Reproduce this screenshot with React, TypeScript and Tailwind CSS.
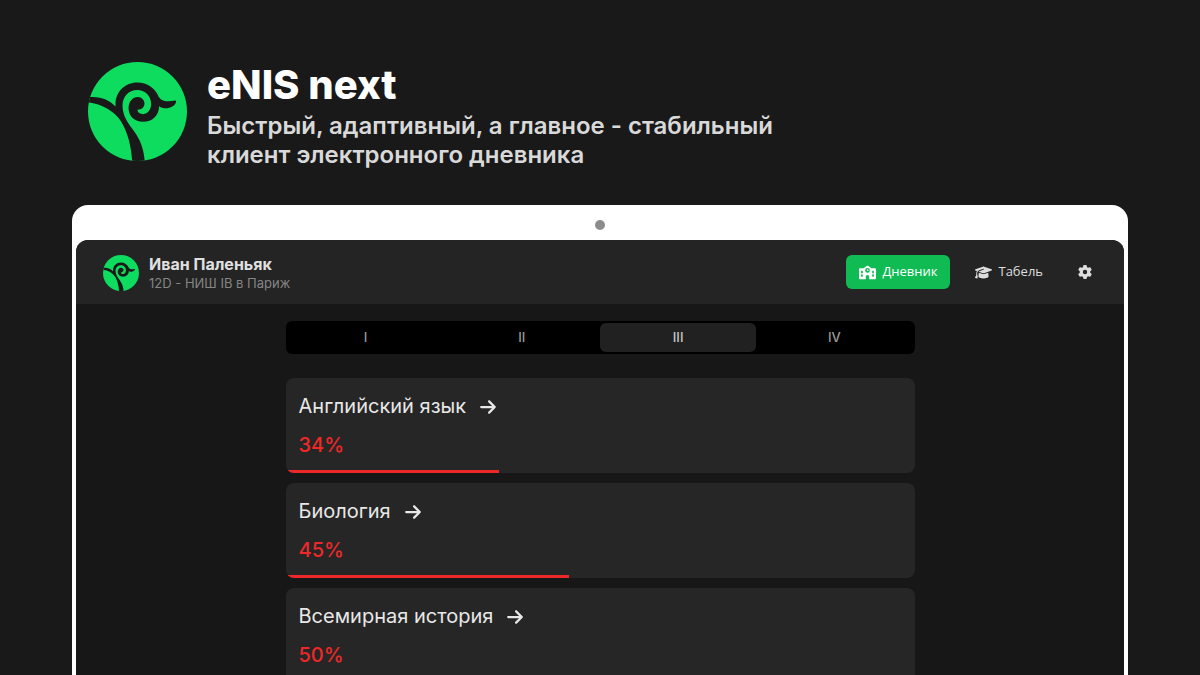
import { FaGear, FaArrowRight, FaSchool, FaGraduationCap } from "react-icons/fa6";

type Subject = { name: string; score: number; bar: number };

const subjects: Subject[] = [
  { name: "Английский язык", score: 34, bar: 34 },
  { name: "Биология", score: 45, bar: 45 },
  { name: "Всемирная история", score: 50, bar: 50 },
];

const terms = ["I", "II", "III", "IV"];
const activeTerm = "III";

function Logo({ className }: { className: string }) {
  return (
    <svg viewBox="24 21 298 298" className={className} role="img" aria-label="eNIS next">
      <clipPath id="disc">
        <circle cx="173" cy="170" r="149" />
      </clipPath>
      <g clipPath="url(#disc)">
        <rect x="24" y="21" width="298" height="298" fill="#0ddc5f" />
        <path
          fill="#191919"
          d="M20 128C58 122 86 134 107 155C104 112 135 83 172 83C203 83 226 100 237 126C248 142 268 141 287 137Q290 138 289 142C285 153 271 161 256 160C247 160 242 157 238 154C238 182 217 201 190 201C164 201 146 183 146 160C146 140 158 126 174 126C186 126 194 135 194 146C194 157 186 164 173 165C173 174 182 178 190 178C204 177 214 165 214 147C214 122 195 105 172 105C146 105 128 125 128 152C128 185 145 205 163 230C180 253 192 280 195 322L157 322C155 280 145 235 125 202C103 168 65 147 20 142Z"
        />
      </g>
    </svg>
  );
}

function SubjectCard({ subject }: { subject: Subject }) {
  return (
    <article className="relative h-[95px] shrink-0 overflow-hidden rounded-lg bg-[#262626] px-[13px] pt-[14px]">
      <h2 className="text-xl leading-7 text-[#e8e8e8]">
        <a href="#subject" className="inline-flex items-center gap-[13px]">
          {subject.name}
          <FaArrowRight className="mt-[2px] size-[18px]" aria-hidden="true" />
        </a>
      </h2>
      <p className="mt-[11px] text-xl leading-7 font-medium text-[#ee2828]">{subject.score}%</p>
      <div className="absolute bottom-0 left-0 h-[3px] bg-[#ee2828]" style={{ width: `${subject.bar}%` }} />
    </article>
  );
}

export default function App() {
  return (
    <div className="flex h-screen flex-col overflow-hidden bg-[#191919] font-['Inter',sans-serif]">
      <header className="flex shrink-0 items-start gap-5 px-[88px] pt-[62px]">
        <Logo className="size-[99px] shrink-0" />
        <div className="flex flex-col gap-[3px]">
          <h1 className="text-[40px] leading-[46px] font-extrabold text-white">eNIS next</h1>
          <p className="max-w-[600px] text-2xl leading-[29px] font-semibold text-[#d9d9d9]">
            Быстрый, адаптивный, а главное - стабильный клиент электронного дневника
          </p>
        </div>
      </header>

      <main className="mx-[72px] mt-9 flex min-h-0 flex-1 flex-col rounded-t-2xl bg-white px-1">
        <div className="flex h-[35px] shrink-0 items-center justify-center pt-1">
          <span className="size-[10px] rounded-full bg-[#8c8c8c]" />
        </div>
        <div className="flex min-h-0 flex-1 flex-col overflow-hidden rounded-t-xl bg-[#171717]">
          <div className="flex h-16 shrink-0 items-center justify-between bg-[#242424] pr-[22px] pl-[27px]">
            <div className="flex items-center gap-[10px] pt-[2px]">
              <Logo className="size-9" />
              <div>
                <p className="text-base leading-5 font-bold text-[#e0e0e0]">Иван Паленьяк</p>
                <p className="text-[13px] leading-[18px] text-[#858585]">12D - НИШ IB в Париж</p>
              </div>
            </div>
            <nav className="flex items-center gap-3 font-['Open_Sans',sans-serif] text-[13px] font-medium text-[#dedede]">
              <a href="#diary" className="flex h-[34px] items-center gap-[6px] rounded-md bg-[#10bb54] px-[13px] text-white">
                <FaSchool className="size-[17px]" aria-hidden="true" />
                Дневник
              </a>
              <a href="#report" className="flex h-[34px] items-center gap-[6px] px-[13px]">
                <FaGraduationCap className="size-[17px]" aria-hidden="true" />
                Табель
              </a>
              <button type="button" aria-label="Настройки" className="flex size-[34px] items-center justify-center">
                <FaGear className="size-[14px]" aria-hidden="true" />
              </button>
            </nav>
          </div>

          <div className="mx-auto flex min-h-0 w-full max-w-[629px] flex-1 flex-col pt-[17px]">
            <div className="grid h-[33px] shrink-0 grid-cols-4 rounded-md bg-black p-[2px] text-[13px] font-medium text-[#9a9a9a]">
              {terms.map((term) => (
                <button
                  key={term}
                  type="button"
                  aria-pressed={term === activeTerm}
                  className={term === activeTerm ? "rounded-md bg-[#212121] text-[#c8c8c8]" : "rounded-md"}
                >
                  {term}
                </button>
              ))}
            </div>
            <div className="mt-6 flex flex-col gap-[10px]">
              {subjects.map((subject) => (
                <SubjectCard key={subject.name} subject={subject} />
              ))}
            </div>
          </div>
        </div>
      </main>
    </div>
  );
}
